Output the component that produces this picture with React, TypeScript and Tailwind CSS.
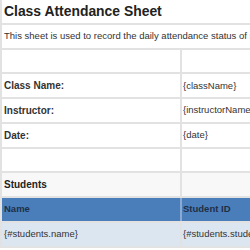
const line = "border-[#e2e2e2]";

function Row({
  left,
  right,
  span,
  className = "",
  leftClass = "",
  rightClass = "",
  divider = line,
}: {
  left?: React.ReactNode;
  right?: React.ReactNode;
  span?: boolean;
  className?: string;
  leftClass?: string;
  rightClass?: string;
  divider?: string;
}) {
  return (
    <div className={`flex h-[24.75px] border-b-2 ${line} ${className}`}>
      {span ? (
        <div className={`flex-1 flex items-center pl-[2px] whitespace-nowrap overflow-hidden ${leftClass}`}>{left}</div>
      ) : (
        <>
          <div className={`w-[180px] shrink-0 flex items-center pl-[2px] border-r-2 ${divider} whitespace-nowrap ${leftClass}`}>{left}</div>
          <div className={`flex-1 flex items-center pl-[1px] whitespace-nowrap overflow-hidden ${rightClass}`}>{right}</div>
        </>
      )}
    </div>
  );
}

export default function App() {
  return (
    <div
      className="w-[250px] h-[250px] overflow-hidden bg-white"
      style={{ fontFamily: '"Liberation Sans", Arial, sans-serif' }}
    >
      <div className={`w-[420px] border-l-2 ${line} text-[9.5px] text-[#333]`}>
        <Row span left="Class Attendance Sheet" leftClass="text-[13.9px] font-bold text-[#222] pt-[1px]" />
        <Row span left="This sheet is used to record the daily attendance status of students." />
        <Row />
        <Row left="Class Name:" leftClass="font-bold text-[10px]" right="{className}" />
        <Row left="Instructor:" leftClass="font-bold text-[10px]" right="{instructorName}" />
        <Row left="Date:" leftClass="font-bold text-[10px]" right="{date}" />
        <Row />
        <Row left="Students" leftClass="font-bold text-[10px] text-[#222]" className="bg-[#f8f8f8]" />
        <Row
          left="Name"
          right="Student ID"
          leftClass="font-bold text-[#1f2f45]"
          rightClass="font-bold text-[#1f2f45]"
          className="bg-[#4a7ebb]"
          divider="border-[#8aaad4]"
        />
        <Row
          left="{#students.name}"
          right="{#students.studentId}"
          className="bg-[#dce6f1]"
        />
      </div>
    </div>
  );
}
